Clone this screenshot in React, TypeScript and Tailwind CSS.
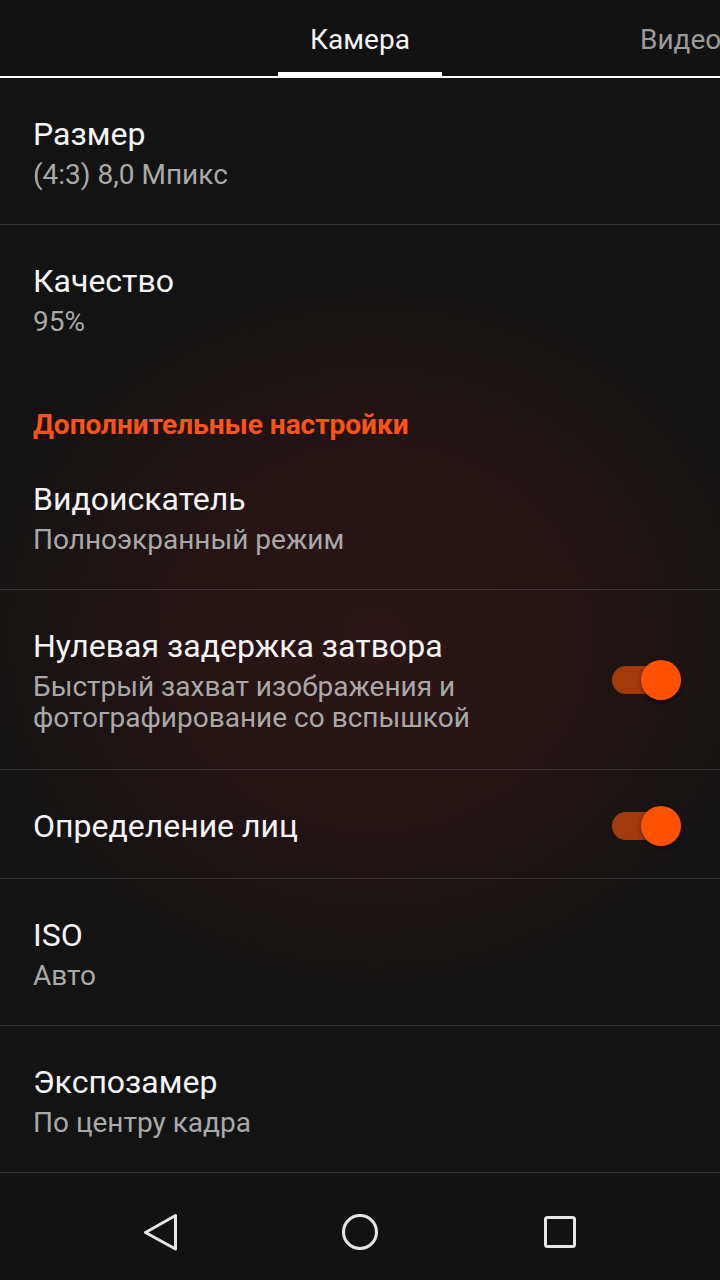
import React from "react";

type Row = {
  title: string;
  sub?: string[];
  toggle?: boolean;
  divider?: boolean;
};

function Toggle() {
  return (
    <div className="relative w-[70px] h-[40px] shrink-0 flex items-center">
      <div className="ml-[1px] w-[58px] h-[28px] rounded-full bg-[#a23a0c]" />
      <div className="absolute right-0 top-0 w-[40px] h-[40px] rounded-full bg-[#ff5100] shadow-[0_2px_4px_rgba(0,0,0,0.45)]" />
    </div>
  );
}

function PrefRow({ row }: { row: Row }) {
  const pb = !row.sub ? "pb-[32px] " : row.sub.length > 1 ? "pb-[36px] " : "pb-[34px] ";
  return (
    <div
      className={
        "flex items-center pl-[33px] pr-[39px] pt-[36px] " +
        pb +
        (row.divider ? "border-b border-white/[0.13]" : "")
      }
    >
      <div className="flex-1 min-w-0">
        <div className="text-[32px] leading-[40px] text-[#f5f5f5]">{row.title}</div>
        {row.sub && (
          <div className="mt-[5px] text-[28px] leading-[31px] text-[#a9a9a9]">
            {row.sub.map((s, i) => (
              <div key={i}>{s}</div>
            ))}
          </div>
        )}
      </div>
      {row.toggle && <Toggle />}
    </div>
  );
}

export default function App() {
  const fontStyle = "font-['Roboto','Noto_Sans',sans-serif]";
  return (
    <div
      className={
        "w-[720px] h-[1280px] flex flex-col overflow-hidden bg-[#121212] " + fontStyle
      }
    >
      {/* Tabs */}
      <div className="h-[78px] shrink-0 flex border-b-2 border-white bg-[#121212] overflow-hidden whitespace-nowrap">
        <div className="w-[278px] shrink-0" />
        <div className="relative w-[164px] shrink-0 pt-[4px] text-center text-[28px] leading-[72px] text-[#f5f5f5]">
          Камера
          <div className="absolute left-0 right-0 bottom-[-2px] h-[6px] bg-white" />
        </div>
        <div className="pl-[198px] pt-[4px] text-[28px] leading-[72px] text-[#9b9b9b]">Видео</div>
      </div>

      {/* Content */}
      <div className="flex-1 overflow-hidden bg-[radial-gradient(ellipse_400px_360px_at_52%_51%,#2c1515_0%,#241414_50%,#141313_100%)]">
        <PrefRow row={{ title: "Размер", sub: ["(4:3) 8,0 Мпикс"], divider: true }} />
        <PrefRow row={{ title: "Качество", sub: ["95%"] }} />
        <div className="pl-[33px] pt-[38px] pb-[2px] text-[28px] leading-[32px] font-bold text-[#ff5216]">
          Дополнительные настройки
        </div>
        <PrefRow row={{ title: "Видоискатель", sub: ["Полноэкранный режим"], divider: true }} />
        <PrefRow
          row={{
            title: "Нулевая задержка затвора",
            sub: ["Быстрый захват изображения и", "фотографирование со вспышкой"],
            toggle: true,
            divider: true,
          }}
        />
        <PrefRow row={{ title: "Определение лиц", toggle: true, divider: true }} />
        <PrefRow row={{ title: "ISO", sub: ["Авто"], divider: true }} />
        <PrefRow row={{ title: "Экспозамер", sub: ["По центру кадра"], divider: true }} />
      </div>

      {/* Nav bar */}
      <div className="h-[106px] shrink-0 bg-[#121212] flex items-center pl-[60px] pt-[10px]">
        <div className="w-[200px] flex justify-center">
          <svg width="36" height="40" viewBox="0 0 36 40" fill="none">
            <path
              d="M33.5 3.5 L33.5 37 L3.5 20.5 Z"
              stroke="#e6e6e6"
              strokeWidth="3"
              strokeLinejoin="round"
            />
          </svg>
        </div>
        <div className="w-[200px] flex justify-center">
          <svg width="40" height="40" viewBox="0 0 40 40" fill="none">
            <circle cx="20" cy="20" r="16.5" stroke="#e6e6e6" strokeWidth="3" />
          </svg>
        </div>
        <div className="w-[200px] flex justify-center">
          <svg width="36" height="36" viewBox="0 0 36 36" fill="none">
            <rect x="3.5" y="3.5" width="29" height="29" rx="2" stroke="#e6e6e6" strokeWidth="3" />
          </svg>
        </div>
      </div>
    </div>
  );
}
